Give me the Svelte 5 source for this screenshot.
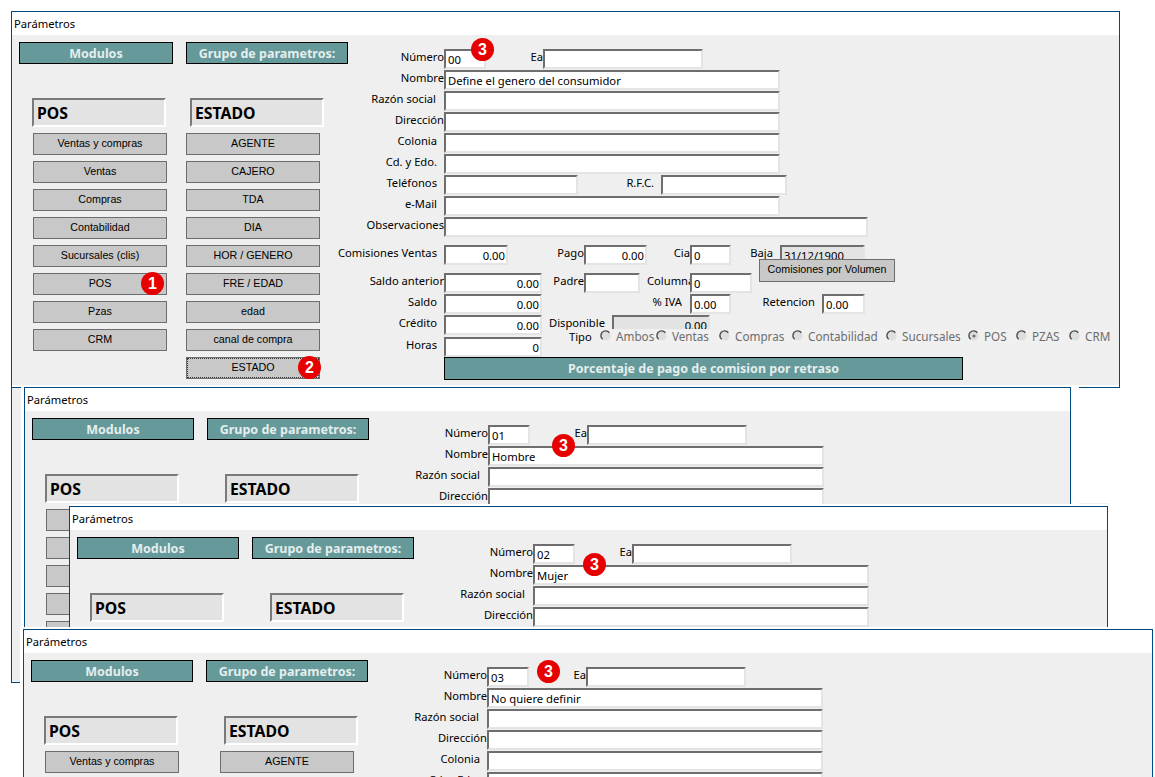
<script lang="ts">
  const windows = [
    { id: 1, x: 11, y: 11, w: 1109, h: 377, narrow: true, halo: false, num: "00", name: "Define el genero del consumidor", bx: 471, by: 38 },
    { id: 2, x: 24, y: 387, w: 1047, h: 241, narrow: false, halo: true, num: "01", name: "Hombre", bx: 552, by: 434 },
    { id: 3, x: 69, y: 506, w: 1039, h: 122, narrow: false, halo: false, num: "02", name: "Mujer", bx: 583, by: 553 },
    { id: 4, x: 23, y: 629, w: 1130, h: 200, narrow: false, halo: true, num: "03", name: "No quiere definir", bx: 537, by: 660 },
  ];

  const modulos = ["Ventas y compras", "Ventas", "Compras", "Contabilidad", "Sucursales (clis)", "POS", "Pzas", "CRM"];
  const grupos = ["AGENTE", "CAJERO", "TDA", "DIA", "HOR / GENERO", "FRE / EDAD", "edad", "canal de compra", "ESTADO"];
  const tipos = ["Ambos", "Ventas", "Compras", "Contabilidad", "Sucursales", "POS", "PZAS", "CRM"];

  const plainRows = [
    { label: "Razón social", inset: 8 },
    { label: "Dirección", inset: 0 },
    { label: "Colonia", inset: 6 },
    { label: "Cd. y Edo.", inset: 6 },
  ];
</script>

<div class="page">
  <div class="stub"></div>
  <div class="scrap"></div>

  {#each windows as win (win.id)}
    <section
      class="win"
      class:narrow={win.narrow}
      class:halo={win.halo}
      class:backed={win.id === 3}
      style="left:{win.x}px;top:{win.y}px;width:{win.w}px;height:{win.h}px"
    >
      <div class="title">Parámetros</div>
      <div class="body">
        <div class="pane">
          <div class="col">
            <div class="head">Modulos</div>
            <div class="box">POS</div>
            {#each modulos as m}
              <button class="btn">{m}</button>
            {/each}
          </div>
          <div class="col col2">
            <div class="head">Grupo de parametros:</div>
            <div class="box">ESTADO</div>
            {#each grupos as g}
              <button class="btn" class:focus={g === "ESTADO"}>{g}</button>
            {/each}
          </div>
        </div>

        <div class="form">
          <div class="row first">
            <span class="lbl">Número</span>
            <input class="f w42" readonly value={win.num} />
            <span class="lbl-ea">Ea</span>
            <input class="f w160" readonly />
          </div>
          <div class="row">
            <span class="lbl">Nombre</span>
            <input class="f w336" readonly value={win.name} />
          </div>
          {#each plainRows as r}
            <div class="row">
              <span class="lbl" class:in8={r.inset === 8} class:in6={r.inset === 6}>{r.label}</span>
              <input class="f w336" readonly />
            </div>
          {/each}
          <div class="row">
            <span class="lbl in6">Teléfonos</span>
            <input class="f w134" readonly />
            <span class="lbl-rfc">R.F.C.</span>
            <input class="f w126" readonly />
          </div>
          <div class="row">
            <span class="lbl in6">e-Mail</span>
            <input class="f w336" readonly />
          </div>
          <div class="row">
            <span class="lbl">Observaciones</span>
            <input class="f w424" readonly />
          </div>

          <div class="grid">
            <span class="lbl in6">Comisiones Ventas</span>
            <input class="f num w64" readonly value="0.00" />
            <span class="lbl">Pago</span>
            <input class="f num w63" readonly value="0.00" />
            <span class="lbl">Cia</span>
            <input class="f w41" readonly value="0" />
            <div class="pair">
              <span>Baja</span>
              <input class="f off w85" readonly value="31/12/1900" />
            </div>

            <span class="lbl">Saldo anterior</span>
            <input class="f num w98" readonly value="0.00" />
            <span class="lbl">Padre</span>
            <input class="f w56" readonly />
            <span class="lbl">Columna</span>
            <input class="f w62" readonly value="0" />
            <span></span>

            <span class="lbl in6">Saldo</span>
            <input class="f num w98" readonly value="0.00" />
            <span></span>
            <span></span>
            <span class="lbl in8">% IVA</span>
            <input class="f w41" readonly value="0.00" />
            <div class="pair">
              <span>Retencion</span>
              <input class="f w43" readonly value="0.00" />
            </div>

            <span class="lbl in6">Crédito</span>
            <input class="f num w98" readonly value="0.00" />
            <div class="disp">
              <span>Disponible</span>
              <input class="f num off w98" readonly value="0.00" />
            </div>
            <span></span>

            <span class="lbl in6">Horas</span>
            <input class="f num w98" readonly value="0" />

            <span class="tipo-lbl">Tipo</span>
            <div class="radios">
              {#each tipos as t}
                <span class="radio">
                  <svg width="12" height="12" viewBox="0 0 12 12">
                    <circle cx="6" cy="6" r="4.6" fill="#dedede" />
                    <path d="M9.3 2.7A4.7 4.7 0 1 0 2.7 9.3" fill="none" stroke="#4a4a4a" stroke-width="1.4" />
                    {#if t === "POS"}<circle cx="6" cy="6" r="1.6" fill="#707070" />{/if}
                  </svg>
                  {t}
                </span>
              {/each}
            </div>
            <button class="btn vol">Comisiones por Volumen</button>
          </div>

          <div class="bar">Porcentaje de pago de comision por retraso</div>
        </div>
      </div>

      {#if win.id === 1}
        <span class="badge" style="left:129px;top:260px">1</span>
        <span class="badge" style="left:286px;top:344px">2</span>
      {/if}
      <span class="badge" style="left:{win.bx - win.x - 1}px;top:{win.by - win.y - 1}px">3</span>
    </section>
  {/each}
</div>

<style>
  :global(body) {
    background: #fff;
  }

  .page {
    position: relative;
    width: 1155px;
    height: 777px;
    overflow: hidden;
    font-family: "Noto Sans", sans-serif;
    font-size: 11.2px;
    color: #000;
  }

  .stub {
    position: absolute;
    left: 11px;
    top: 380px;
    width: 10px;
    height: 303px;
    box-sizing: border-box;
    background: #efefef;
    border-left: 1px solid #00497f;
    border-bottom: 1px solid #00497f;
  }

  .scrap {
    position: absolute;
    left: 1079px;
    top: 503px;
    width: 30px;
    height: 2px;
    background: #efefef;
  }

  .win {
    position: absolute;
    box-sizing: border-box;
    border: 1px solid #00497f;
    background: #fff;
    overflow: hidden;
  }

  .win.halo {
    box-shadow: -3px -2px 0 #fff, 8px -2px 0 #fff;
  }

  .win.backed {
    box-shadow: 0 -2px 0 #fff;
  }

  .title {
    height: 23px;
    line-height: 23px;
    padding-left: 2px;
    background: #fff;
  }

  .body {
    display: flex;
    background: #efefef;
    height: 350px;
  }

  .pane {
    box-sizing: border-box;
    flex: 0 0 353px;
    min-width: 0;
    display: flex;
    gap: 13px;
    padding: 7px 0 0 7px;
  }

  .narrow .pane {
    flex-basis: 322px;
  }

  .col {
    flex: none;
    width: 162px;
    display: flex;
    flex-direction: column;
    align-items: flex-start;
  }

  .narrow .col:first-child {
    width: 154px;
  }

  .head {
    box-sizing: border-box;
    width: 100%;
    height: 22px;
    line-height: 21px;
    border: 1px solid #000;
    background: #669999;
    color: #e4eeee;
    font-weight: 700;
    font-size: 12.5px;
    text-align: center;
  }

  .box {
    box-sizing: border-box;
    width: 134px;
    height: 29px;
    margin: 34px 0 6px 13px;
    padding: 0 0 0 3px;
    line-height: 27px;
    background: #e3e3e3;
    border: 2px solid;
    border-color: #7a7a7a #fff #fff #7a7a7a;
    font-weight: 700;
    font-size: 15.8px;
  }

  .col2 .box {
    margin-left: 18px;
  }

  .narrow .col2 .box {
    margin-left: 4px;
  }

  .btn {
    box-sizing: border-box;
    width: 134px;
    height: 22px;
    margin: 0 0 6px 14px;
    padding: 0 0 3px;
    background: #c8c8c8;
    border: 1px solid #6d6d6d;
    border-radius: 0;
    font-family: "Liberation Sans", sans-serif;
    font-size: 10.7px;
    color: #000;
    white-space: nowrap;
  }

  .col2 .btn {
    margin-left: 14px;
  }

  .narrow .col2 .btn {
    margin-left: 0;
  }

  .btn.focus {
    outline: 1px dotted #333;
    outline-offset: -2px;
  }

  .form {
    flex: 1;
    padding-top: 14px;
  }

  .row {
    display: flex;
    height: 21px;
  }

  .lbl {
    box-sizing: border-box;
    flex: 0 0 110px;
    line-height: 16px;
    text-align: right;
    white-space: nowrap;
  }

  .lbl.in6 {
    padding-right: 7px;
  }

  .lbl.in8 {
    padding-right: 8px;
  }

  .lbl-ea {
    width: 57px;
    line-height: 16px;
    text-align: right;
  }

  .lbl-rfc {
    width: 83px;
    padding-right: 7px;
    box-sizing: border-box;
    line-height: 16px;
    text-align: right;
  }

  .f {
    box-sizing: border-box;
    height: 20px;
    margin: 0;
    padding: 0 1px 0 2px;
    border: 2px solid;
    border-color: #6e6e6e #e4e4e4 #e4e4e4 #6e6e6e;
    border-radius: 0;
    outline: none;
    background: #fff;
    font: inherit;
    font-size: 11.25px;
    color: #000;
  }

  .f.num {
    text-align: right;
  }

  .f.off {
    background: #e3e3e3;
  }

  .w41 { width: 41px; }
  .w42 { width: 42px; }
  .w43 { width: 43px; }
  .w56 { width: 56px; }
  .w62 { width: 62px; }
  .w63 { width: 63px; }
  .w64 { width: 64px; }
  .w85 { width: 85px; }
  .w98 { width: 98px; }
  .w126 { width: 126px; }
  .w134 { width: 134px; }
  .w160 { width: 160px; }
  .w336 { width: 336px; }
  .w424 { width: 424px; }

  .grid {
    position: relative;
    display: grid;
    grid-template-columns: 110px 98px 42px 63px 43px 62px 113px;
    grid-template-rows: 28px 21px 21px 22px 20px;
    margin-top: 7px;
  }

  .pair {
    display: flex;
    justify-content: flex-end;
    gap: 7px;
    line-height: 16px;
    white-space: nowrap;
  }

  .disp {
    grid-column: 3 / span 4;
    display: flex;
    padding-left: 7px;
    line-height: 16px;
  }

  .disp span {
    flex: 0 0 63px;
  }

  .tipo-lbl {
    position: absolute;
    left: 235px;
    top: 84px;
    line-height: 16px;
  }

  .radios {
    position: absolute;
    left: 264px;
    top: 84px;
    height: 14px;
    padding-left: 2px;
    display: grid;
    grid-template-columns: 56px 63px 73px 94px 82px 48px 53px 46px;
    background: #f0f0f0;
    color: #6d6d6d;
    font-size: 11.7px;
    line-height: 14px;
    white-space: nowrap;
  }

  .radio {
    display: flex;
    align-items: center;
    gap: 4px;
  }

  .btn.vol {
    position: absolute;
    left: 425px;
    top: 14px;
    width: 136px;
    height: 23px;
    margin: 0;
  }

  .bar {
    box-sizing: border-box;
    width: 519px;
    height: 23px;
    margin-left: 110px;
    line-height: 21px;
    border: 1px solid #000;
    background: #669999;
    color: #e4eeee;
    font-weight: 700;
    font-size: 12.5px;
    text-align: center;
  }

  .badge {
    position: absolute;
    width: 23px;
    height: 23px;
    border-radius: 50%;
    background: #e60000;
    color: #fff;
    font-family: "Liberation Sans", sans-serif;
    font-weight: 700;
    font-size: 16px;
    line-height: 23px;
    text-align: center;
  }
</style>
